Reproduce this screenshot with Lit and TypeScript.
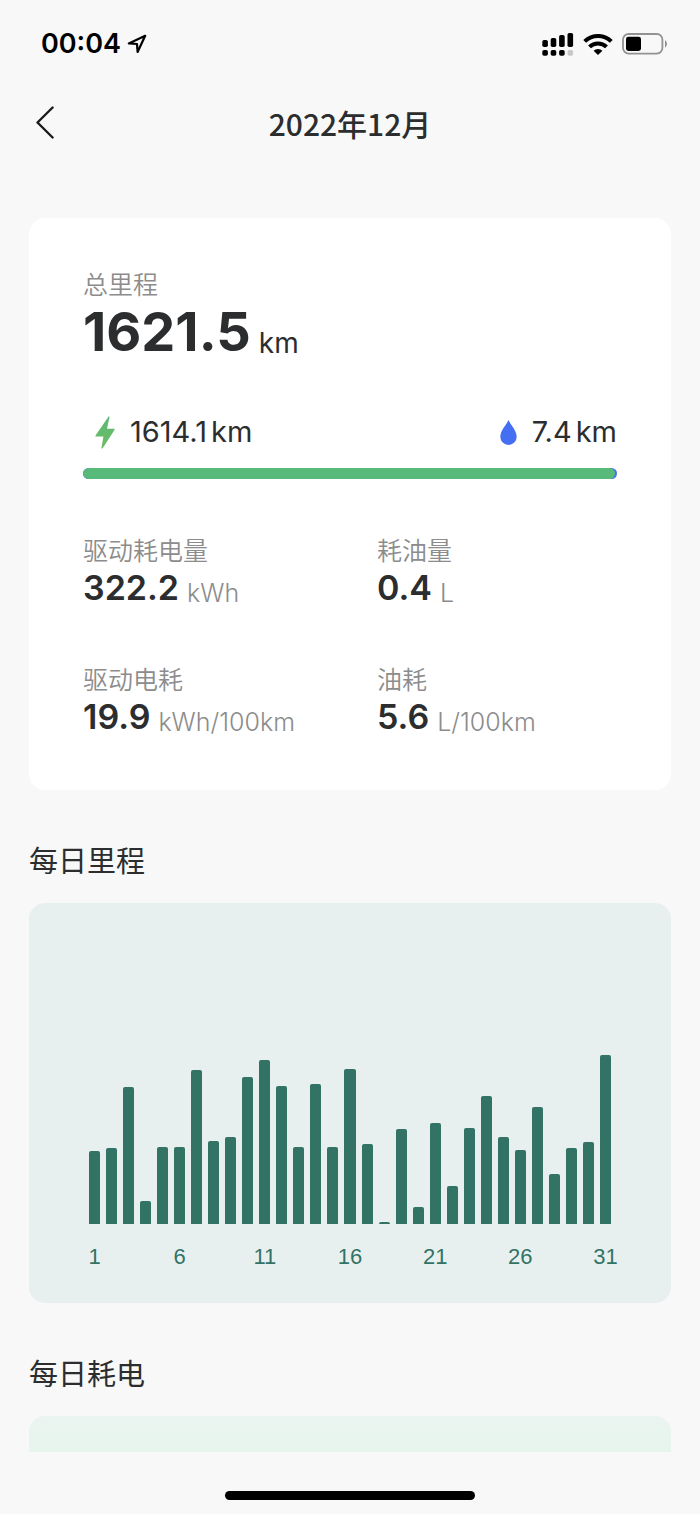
import { LitElement, css, html, svg } from "lit";
import { customElement, property } from "lit/decorators.js";

interface Metric {
  label: string;
  value: string;
  unit: string;
}

const METRICS: Metric[] = [
  { label: "驱动耗电量", value: "322.2", unit: "kWh" },
  { label: "耗油量", value: "0.4", unit: "L" },
  { label: "驱动电耗", value: "19.9", unit: "kWh/100km" },
  { label: "油耗", value: "5.6", unit: "L/100km" },
];

const ELECTRIC_KM = 1614.1;
const TOTAL_KM = 1621.5;

// One value per day of the month, on a 0–200 scale.
const DAILY = [
  73, 76, 137, 23, 77, 77, 154, 83, 87, 147, 164, 138, 77, 140, 77, 155, 80, 2,
  95, 17, 101, 38, 96, 128, 87, 74, 117, 50, 76, 82, 169,
];
const SCALE_MAX = 200;

@customElement("status-bar")
export class StatusBar extends LitElement {
  static styles = css`
    :host {
      display: flex;
      align-items: center;
      justify-content: space-between;
      height: 88px;
      padding: 0 32px 0 41px;
      color: #000;
    }
    .left,
    .right {
      display: flex;
      align-items: center;
    }
    .left {
      gap: 6px;
    }
    .right {
      gap: 9px;
    }
    .time {
      font-size: 27px;
      line-height: 34px;
      font-weight: 600;
    }
    svg {
      display: block;
    }
  `;

  render() {
    const columns = [7, 5, 2, 0];
    return html`
      <div class="left">
        <span class="time">00:04</span>
        <svg width="20" height="20" viewBox="0 0 20 20" aria-hidden="true">
          <path d="M18.2 1.8 1.8 9.4 10 10 10.6 18Z" fill="none" stroke="#000" stroke-width="2.2" stroke-linejoin="round" />
        </svg>
      </div>
      <div class="right">
        <svg width="32" height="23" viewBox="0 0 32 23" aria-hidden="true">
          ${columns.map(
            (top, i) => svg`
              <rect x=${i * 8.4 + 0.3} y=${top} width="5.6" height=${14 - top} rx="1.8" />
              <rect x=${i * 8.4 + 0.3} y="17" width="5.6" height="5.8" rx="1.8" fill=${i === 3 ? "#c8c8c8" : "#000"} />`
          )}
        </svg>
        <svg width="30" height="21" viewBox="0 0 30 21" aria-hidden="true">
          <g fill="none" stroke="#000" stroke-width="4">
            <path d="M1.7 7.4a19 19 0 0 1 26.6 0" />
            <path d="M6.5 12.9a12.200 12.200 0 0 1 17 0" />
          </g>
          <path d="M10.6 16.800a6.400 6.400 0 0 1 8.800 0L15 21Z" />
        </svg>
        <svg width="46" height="22" viewBox="0 0 46 22" aria-hidden="true">
          <rect x="1" y="1" width="39.4" height="19.6" rx="5.6" fill="none" stroke="#929292" stroke-width="1.8" />
          <rect x="4" y="3.8" width="15" height="14.2" rx="2.4" />
          <path d="M43 7.2c2.6 1 2.6 6.200 0 7.200Z" fill="#929292" />
        </svg>
      </div>
    `;
  }
}

@customElement("day-chart")
export class DayChart extends LitElement {
  @property({ attribute: false }) values: number[] = [];

  static styles = css`
    :host {
      display: block;
      padding: 121px 60px 34px;
      border-radius: 16px;
      background: #e8f0ef;
    }
    .plot,
    .axis {
      display: grid;
      grid-template-columns: repeat(31, minmax(0, 1fr));
      column-gap: 6px;
    }
    .plot {
      height: 200px;
      align-items: end;
    }
    .bar {
      border-radius: 2px 2px 0 0;
      background: #327365;
    }
    .axis {
      margin-top: 21px;
      justify-items: center;
      font-family: "Liberation Sans", Arial, sans-serif;
      font-size: 22px;
      line-height: 24px;
      color: #327365;
    }
  `;

  render() {
    return html`
      <div class="plot">
        ${this.values.map(
          (v) => html`<div class="bar" style="height:${(v / SCALE_MAX) * 100}%"></div>`
        )}
      </div>
      <div class="axis">
        ${this.values.map((_, i) => html`<span>${i % 5 === 0 ? i + 1 : ""}</span>`)}
      </div>
    `;
  }
}

@customElement("app-root")
export class AppRoot extends LitElement {
  static styles = css`
    :host {
      display: flex;
      flex-direction: column;
      min-height: 100vh;
      background: #f8f8f8;
      color: #2c2d2e;
      font-family: Inter, "Noto Sans CJK SC", sans-serif;
    }
    * {
      box-sizing: border-box;
    }
    svg {
      display: block;
    }
    h1,
    h2,
    p,
    dl,
    dd {
      margin: 0;
    }
    .nav {
      display: grid;
      grid-template-columns: 61px 1fr 61px;
      align-items: center;
      height: 70px;
    }
    .back {
      justify-self: end;
      padding: 6px;
      border: 0;
      background: none;
      color: #1a1a1a;
      cursor: pointer;
    }
    .title {
      font-family: "Noto Sans CJK SC", sans-serif;
      font-size: 30px;
      line-height: 40px;
      font-weight: 500;
      text-align: center;
    }
    .content {
      flex: 1;
      display: flex;
      flex-direction: column;
      padding: 60px 29px 0;
    }
    .card {
      padding: 51px 54px 52px;
      border-radius: 16px;
      background: #fff;
    }
    .label {
      font-size: 25px;
      line-height: 32px;
      font-weight: 350;
      color: #8c8c8c;
    }
    .reading {
      display: flex;
      align-items: flex-end;
      gap: 8px;
      white-space: nowrap;
    }
    .total {
      margin-top: 3px;
      font-size: 54px;
      line-height: 56px;
      font-weight: 700;
    }
    .total .unit {
      font-size: 28px;
      line-height: 34px;
      font-weight: 400;
    }
    .split {
      display: flex;
      justify-content: space-between;
      margin-top: 55px;
      font-size: 29px;
      line-height: 34px;
    }
    .source {
      display: flex;
      align-items: center;
      gap: 15px;
    }
    .electric {
      padding-left: 12px;
    }
    .distance {
      display: flex;
      gap: 4px;
    }
    .track {
      height: 11px;
      margin-top: 19px;
      border-radius: 6px;
      background: #446ff2;
      overflow: hidden;
    }
    .fill {
      height: 100%;
      border-radius: 6px;
      background: #58ba7a;
    }
    .metrics {
      display: grid;
      grid-template-columns: 1fr 240px;
      row-gap: 55px;
      margin-top: 56px;
    }
    .value {
      font-size: 34px;
      line-height: 42px;
      font-weight: 600;
    }
    .value .unit {
      font-size: 25px;
      line-height: 32px;
      font-weight: 350;
      color: #8c8c8c;
    }
    .heading {
      margin: 52px 0 21px;
      font-size: 29px;
      line-height: 40px;
      font-weight: 400;
    }
    .next {
      flex: 1;
      min-height: 36px;
      border-radius: 16px 16px 0 0;
      background: linear-gradient(#eaf4f0, #e6f5ed);
    }
    .footer {
      display: flex;
      justify-content: center;
      height: 62px;
      padding-top: 39px;
    }
    .indicator {
      width: 250px;
      height: 9px;
      border-radius: 5px;
      background: #000;
    }
  `;

  render() {
    return html`
      <status-bar></status-bar>
      <header class="nav">
        <button class="back" type="button" aria-label="返回">
          <svg width="20" height="34" viewBox="0 0 20 34">
            <path d="M17.600 1.500 2.500 16.500 17.600 31.500" fill="none" stroke="currentColor" stroke-width="2.4" stroke-linecap="round" stroke-linejoin="round" />
          </svg>
        </button>
        <h1 class="title">2022年12月</h1>
      </header>
      <main class="content">
        <section class="card">
          <p class="label">总里程</p>
          <p class="reading total">1621.5<span class="unit">km</span></p>
          <div class="split">
            <div class="source electric">
              <svg width="20" height="33" viewBox="0 0 20 33" aria-hidden="true">
                <defs>
                  <linearGradient id="bolt" x1="0" y1="0" x2="0" y2="1">
                    <stop offset="0" stop-color="#5cb878" />
                    <stop offset="1" stop-color="#6cbd62" />
                  </linearGradient>
                </defs>
                <path d="M13.600.4 0.500 19.600Q0 20.600 1 20.600H8.400L6.500 32Q6.800 33 7.700 32.200L19.600 13.800Q20 12.800 19 12.700H12L14.500 1Q14.300 0 13.600.4Z" fill="url(#bolt)" />
              </svg>
              <span class="distance"><span>1614.1</span><span>km</span></span>
            </div>
            <div class="source">
              <svg width="17" height="25" viewBox="0 0 17 25" aria-hidden="true">
                <path d="M8.500 0C10 4 16.700 10.500 16.700 16.800A8.200 8.200 0 0 1 .3 16.800C.3 10.500 7 4 8.500 0Z" fill="#446ff2" />
              </svg>
              <span class="distance"><span>7.4</span><span>km</span></span>
            </div>
          </div>
          <div class="track">
            <div class="fill" style="width:${(ELECTRIC_KM / TOTAL_KM) * 100}%"></div>
          </div>
          <dl class="metrics">
            ${METRICS.map(
              (m) => html`
                <div>
                  <dt class="label">${m.label}</dt>
                  <dd class="reading value">${m.value}<span class="unit">${m.unit}</span></dd>
                </div>
              `
            )}
          </dl>
        </section>
        <h2 class="heading">每日里程</h2>
        <day-chart .values=${DAILY}></day-chart>
        <h2 class="heading">每日耗电</h2>
        <div class="next"></div>
      </main>
      <footer class="footer"><div class="indicator"></div></footer>
    `;
  }
}
